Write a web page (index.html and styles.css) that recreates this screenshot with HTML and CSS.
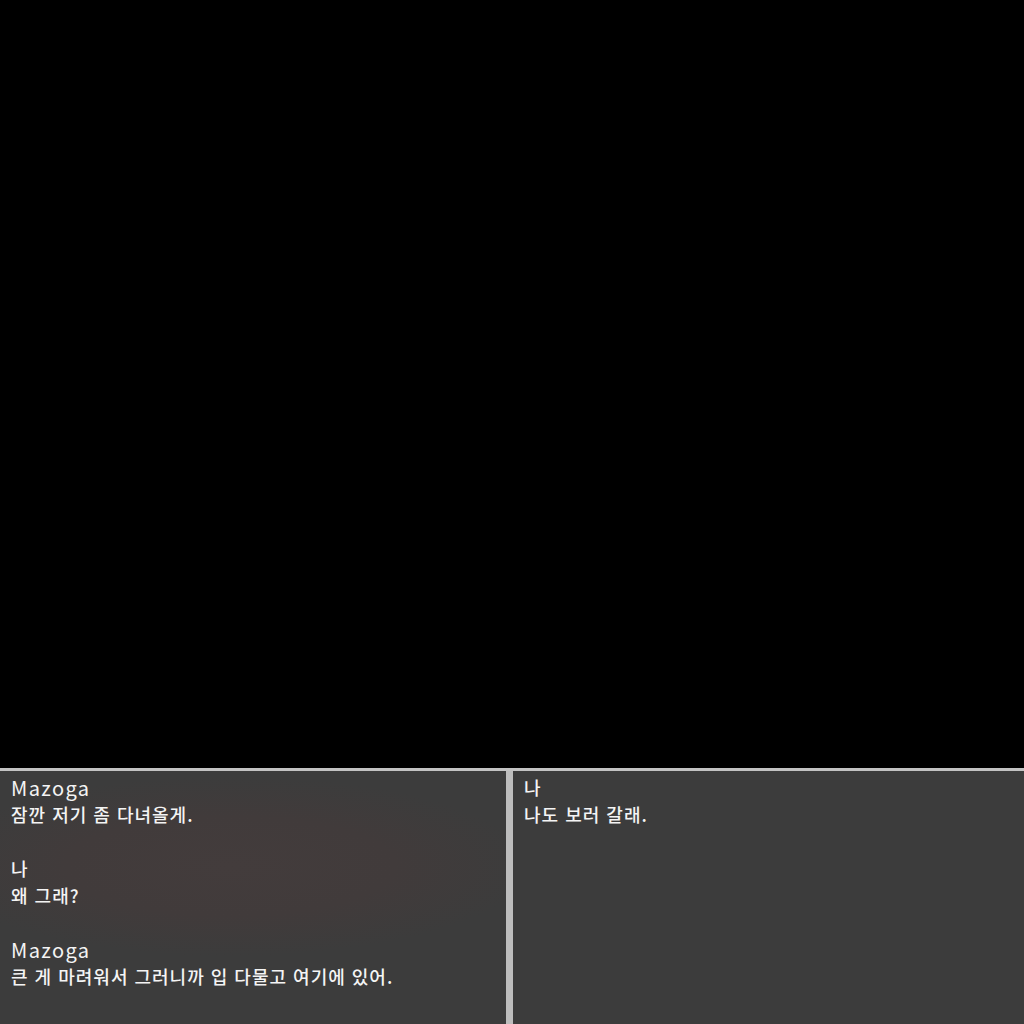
FILE: index.html
```html
<!DOCTYPE html>
<html lang="ko">
<head>
<meta charset="utf-8">
<link rel="stylesheet" href="styles.css">
</head>
<body>
<div class="screen">
  <div class="scene"></div>
  <div class="dialog">
    <div class="panel left">
      <div class="entry">
        <div class="name latin">Mazoga</div>
        <div class="line">잠깐 저기 좀 다녀올게.</div>
      </div>
      <div class="entry">
        <div class="name">나</div>
        <div class="line">왜 그래?</div>
      </div>
      <div class="entry">
        <div class="name latin">Mazoga</div>
        <div class="line">큰 게 마려워서 그러니까 입 다물고 여기에 있어.</div>
      </div>
    </div>
    <div class="divider"></div>
    <div class="panel right">
      <div class="entry">
        <div class="name">나</div>
        <div class="line">나도 보러 갈래.</div>
      </div>
    </div>
  </div>
</div>
</body>
</html>
```
FILE: styles.css
```css
html, body {
  margin: 0;
  padding: 0;
  background: #000;
}
.screen {
  width: 1024px;
  height: 1024px;
  display: flex;
  flex-direction: column;
  overflow: hidden;
}
.scene {
  height: 768px;
  background: #000;
  flex: none;
}
.dialog {
  flex: 1;
  display: flex;
  border-top: 3px solid #c3c3c3;
  font-family: "Noto Sans CJK KR", "Noto Sans", sans-serif;
  font-size: 18px;
  font-weight: 500;
  letter-spacing: 1px;
  color: #f4f4f4;
}
.panel {
  background: #3c3c3c;
  padding: 3px 0 0 11px;
  box-sizing: border-box;
}
.left {
  width: 506px;
  background: radial-gradient(ellipse 300px 90px at 230px 95px, #433c3c 0%, #413b3b 55%, #3c3c3c 100%);
}
.right {
  flex: 1;
}
.divider {
  width: 7px;
  background: #bdbdbd;
}
.entry {
  margin-bottom: 27px;
}
.name, .line {
  height: 27px;
  line-height: 27px;
  white-space: nowrap;
}
.latin {
  font-size: 20px;
  font-weight: 400;
  letter-spacing: 1.4px;
}
```
